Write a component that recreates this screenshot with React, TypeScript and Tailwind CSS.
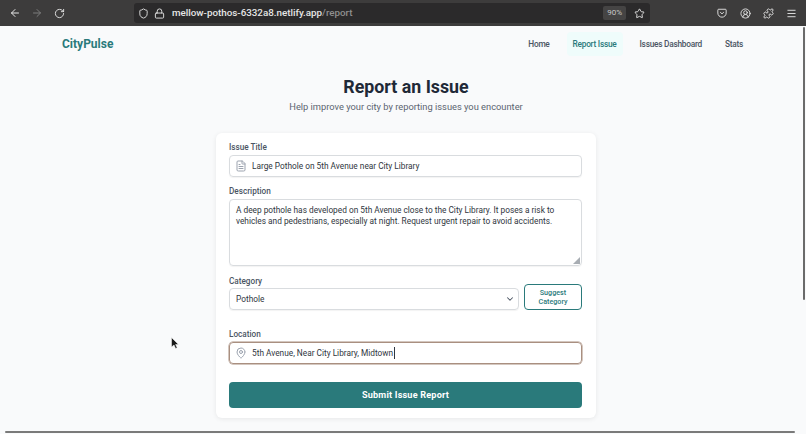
import { ArrowLeft, ArrowRight, RotateCw, Shield, Lock, Star, CircleUserRound, Puzzle, Menu, FileText, MapPin, ChevronDown } from 'lucide-react';

const font = 'font-["Roboto",sans-serif]';
const labelClass = 'text-[8.2px] font-medium leading-[12px] text-[#4b5563]';

function BrowserBar() {
  return (
    <div className="flex h-[26px] items-center bg-[#3d3c3c] text-[#e6e6e6]">
      <div className="flex w-[134px] items-center pl-[9px]">
        <ArrowLeft size={12} />
        <ArrowRight size={12} className="ml-[10px] text-[#7c7c7c]" />
        <RotateCw size={11} className="ml-[11px]" />
      </div>
      <div className="flex h-[20px] w-[516px] items-center rounded-[3px] bg-[#2b2a2b] pl-[4px] pr-[4px]">
        <Shield size={11} />
        <Lock size={11} className="ml-[5px]" />
        <span className="ml-[7px] text-[9.8px] font-medium">
          mellow-pothos-6332a8.netlify.app<span className="text-[#8f8f8f]">/report</span>
        </span>
        <span className="ml-auto rounded-[2px] bg-[#454444] px-[4px] py-[2px] text-[8px] leading-[10px] text-[#c8c8c8]">90%</span>
        <Star size={11} className="ml-[8px] mr-[1px]" />
      </div>
      <div className="ml-auto flex items-center gap-[12px] pr-[9px]">
        <svg width="10" height="10" viewBox="0 0 12 12" fill="none" stroke="currentColor" strokeWidth="1.1" className="mr-[1px]">
          <path d="M2 1.500h8a1 1 0 0 1 1 1V6a5 5 0 0 1-10 0V2.500a1 1 0 0 1 1-1z" />
          <path d="M3.800 5l2.200 2 2.200-2" />
        </svg>
        <CircleUserRound size={11} />
        <Puzzle size={11} />
        <Menu size={11} />
      </div>
    </div>
  );
}

function NavBar() {
  return (
    <div className="flex h-[36px] items-center pl-[62px] pr-[57px]">
      <span className="text-[12px] font-bold text-[#2a7a7b]">CityPulse</span>
      <div className="ml-auto flex items-center gap-[11px] text-[8.3px] font-medium tracking-[-0.25px] text-[#4b5563]">
        <span className="px-[6px]">Home</span>
        <span className="rounded-[4px] bg-[#effcfb] px-[6px] py-[6px] text-[#2a7a7b]">Report Issue</span>
        <span className="px-[6px]">Issues Dashboard</span>
        <span className="px-[6px]">Stats</span>
      </div>
    </div>
  );
}

function ReportForm() {
  return (
    <div className="mx-auto mt-[19px] w-[380px] rounded-[6px] bg-white pb-[10px] pl-[13px] pr-[14px] pt-[8px] shadow-[0_1px_5px_rgba(0,0,0,0.08)]">
      <div className={labelClass}>Issue Title</div>
      <div className="mt-[2px] flex h-[22px] items-center rounded-[4px] border border-[#d9dcdf] pl-[5px] text-[8.3px] text-[#2f3640] shadow-[0_1px_1px_rgba(0,0,0,0.05)]">
        <FileText size={12} className="text-[#9ca3af]" />
        <span className="ml-[5px]">Large Pothole on 5th Avenue near City Library</span>
      </div>
      <div className={`mt-[8px] ${labelClass}`}>Description</div>
      <div className="relative mt-[2px] h-[67px] rounded-[4px] border border-[#d9dcdf] pl-[6px] pr-[20px] pt-[5px] text-[8.3px] leading-[11px] text-[#2f3640] shadow-[0_1px_1px_rgba(0,0,0,0.05)]">
        A deep pothole has developed on 5th Avenue close to the City Library. It poses a risk to vehicles and pedestrians, especially at night. Request urgent repair to avoid accidents.
        <svg width="7" height="7" viewBox="0 0 7 7" className="absolute bottom-[1px] right-[1px]">
          <path d="M7 0V7H0Z" fill="#a8adb3" />
        </svg>
      </div>
      <div className="mt-[9px] flex items-end gap-[5px]">
        <div className="w-[290px]">
          <div className={labelClass}>Category</div>
          <div className="mt-[1px] flex h-[22px] items-center rounded-[4px] border border-[#d9dcdf] pl-[6px] pr-[3px] text-[8.3px] text-[#2f3640] shadow-[0_1px_1px_rgba(0,0,0,0.05)]">
            Pothole
            <ChevronDown size={10} strokeWidth={2.5} className="ml-auto text-[#4b5563]" />
          </div>
        </div>
        <button className="h-[26px] w-[58px] rounded-[4px] border border-[#2a7a7b] px-[12px] text-[7.2px] font-medium leading-[9px] text-[#2a7a7b]">
          Suggest Category
        </button>
      </div>
      <div className={`mt-[18px] ${labelClass}`}>Location</div>
      <div className="mt-[2px] flex h-[22px] items-center rounded-[4px] border border-[#a98f80] pl-[5px] text-[8.3px] text-[#2f3640] ring-[0.5px] ring-[#a98f80]">
        <MapPin size={12} className="text-[#9ca3af]" />
        <span className="ml-[5px] border-r border-[#2f3640] pr-px">5th Avenue, Near City Library, Midtown</span>
      </div>
      <button className="mt-[18px] h-[26px] w-full rounded-[4px] bg-[#2a7a7b] pt-[1px] text-[9.1px] font-bold tracking-[0.2px] text-white">
        Submit Issue Report
      </button>
    </div>
  );
}

export default function App() {
  return (
    <div className={`${font} relative h-[434px] w-[806px] overflow-hidden bg-[#f9fafb]`}>
      <BrowserBar />
      <NavBar />
      <div className="pl-[6px]">
        <div className="mt-[13px] text-center">
          <h1 className="text-[17.8px] font-bold leading-[24px] text-[#1f2937]">Report an Issue</h1>
          <p className="mt-[1px] text-[9.3px] leading-[14px] text-[#5b6470]">Help improve your city by reporting issues you encounter</p>
        </div>
        <ReportForm />
      </div>
      {/* scrollbars */}
      <div className="absolute right-[1px] top-[27px] h-[273px] w-[2px] rounded-full bg-[#6b6b6b]" />
      <div className="absolute bottom-[1px] left-[5px] h-[2px] w-[790px] rounded-full bg-[#7a7a7a]" />
      <svg width="9" height="13" viewBox="0 0 9 13" className="absolute left-[171px] top-[337px]">
        <path d="M0.500 0.500V10L3 8l1.600 3.500 1.600-.7L4.600 7.500H7.500Z" fill="#1a1a1a" stroke="#fff" strokeWidth="0.5" />
      </svg>
    </div>
  );
}
